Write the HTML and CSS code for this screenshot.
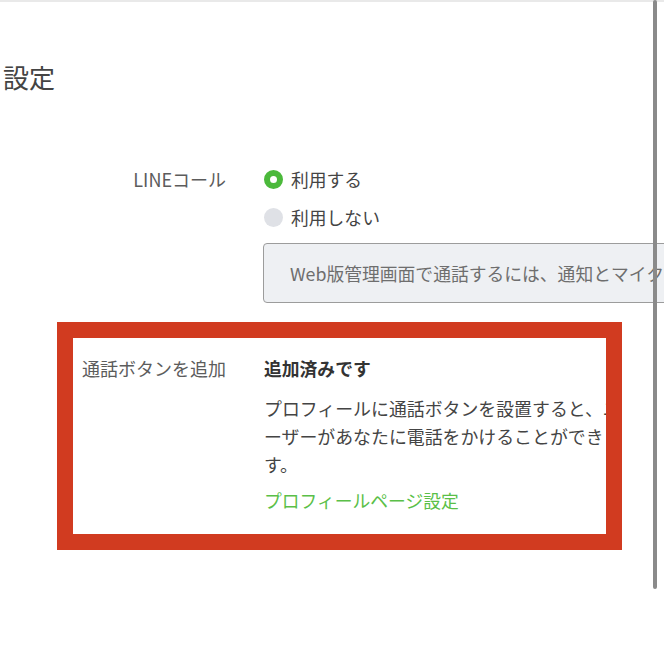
FILE: index.html
```html
<!DOCTYPE html>
<html lang="ja">
<head>
<meta charset="utf-8">
<title>設定</title>
<link rel="stylesheet" href="styles.css">
</head>
<body>
<div class="page">
  <h1 class="title">設定</h1>
  <div class="settings">
    <div class="row row-call">
      <div class="label">LINEコール</div>
      <div class="value">
        <div class="option"><span class="radio radio-on"></span><span>利用する</span></div>
        <div class="option"><span class="radio radio-off"></span><span>利用しない</span></div>
        <div class="notice">Web版管理画面で通話するには、通知とマイクへのアクセスを許可してください。</div>
      </div>
    </div>
    <div class="row row-button">
      <div class="label label-top">通話ボタンを追加</div>
      <div class="value">
        <div class="status">追加済みです</div>
        <p class="desc">プロフィールに通話ボタンを設置すると、ユーザーがあなたに電話をかけることができます。</p>
        <a class="link" href="#">プロフィールページ設定</a>
      </div>
    </div>
  </div>
  <div class="highlight"></div>
  <div class="scrollbar"></div>
</div>
</body>
</html>
```

FILE: styles.css
```css
html, body {
  margin: 0;
  padding: 0;
  background: #ffffff;
}
body {
  width: 664px;
  height: 654px;
  overflow: hidden;
  font-family: "Noto Sans CJK JP", "Noto Sans", sans-serif;
  color: #444;
}
.page {
  position: relative;
  height: 654px;
  border-top: 2px solid #e9e9e9;
  box-sizing: border-box;
}
.title {
  margin: 58px 0 0 3px;
  font-size: 26px;
  line-height: 34px;
  font-weight: 400;
  color: #444;
}
.settings {
  margin-top: 66px;
}
.row {
  display: grid;
  grid-template-columns: 226px 1fr;
  column-gap: 38px;
}
.label {
  text-align: right;
  font-size: 18px;
  line-height: 38px;
  color: #5c5c5c;
  white-space: nowrap;
}
.label-top {
  line-height: 28px;
}
.value {
  min-width: 0;
}
.option {
  display: flex;
  align-items: center;
  gap: 8px;
  height: 38px;
  font-size: 17.8px;
  color: #444;
}
.radio {
  width: 19px;
  height: 19px;
  border-radius: 50%;
  box-sizing: border-box;
  flex: none;
}
.radio-on {
  border: 6px solid #4bb93b;
  background: #fff;
}
.radio-off {
  background: #dfe1e6;
}
.notice {
  margin-top: 7px;
  margin-left: -1px;
  width: 520px;
  height: 60px;
  box-sizing: border-box;
  border: 1px solid #9c9c9c;
  border-radius: 4px;
  background: #eef0f3;
  padding: 0 26px;
  font-size: 17.8px;
  line-height: 58px;
  color: #6e6e6e;
  white-space: nowrap;
  overflow: hidden;
}
.row-button {
  margin-top: 51px;
}
.status {
  font-size: 17.8px;
  line-height: 28px;
  font-weight: 700;
  color: #333;
}
.desc {
  margin: 12px 0 0;
  width: 362px;
  font-size: 17.9px;
  line-height: 28px;
  color: #444;
  line-break: loose;
}
.link {
  display: block;
  margin-top: 8px;
  font-size: 17.8px;
  line-height: 28px;
  color: #5abf48;
  text-decoration: none;
}
.highlight {
  position: absolute;
  left: 57px;
  top: 320px;
  width: 565px;
  height: 228px;
  box-sizing: border-box;
  border: 16px solid #d13b20;
}
.scrollbar {
  position: absolute;
  left: 653px;
  top: -2px;
  width: 4px;
  height: 589px;
  border-radius: 2px;
  background: #8a8a8a;
}
```
